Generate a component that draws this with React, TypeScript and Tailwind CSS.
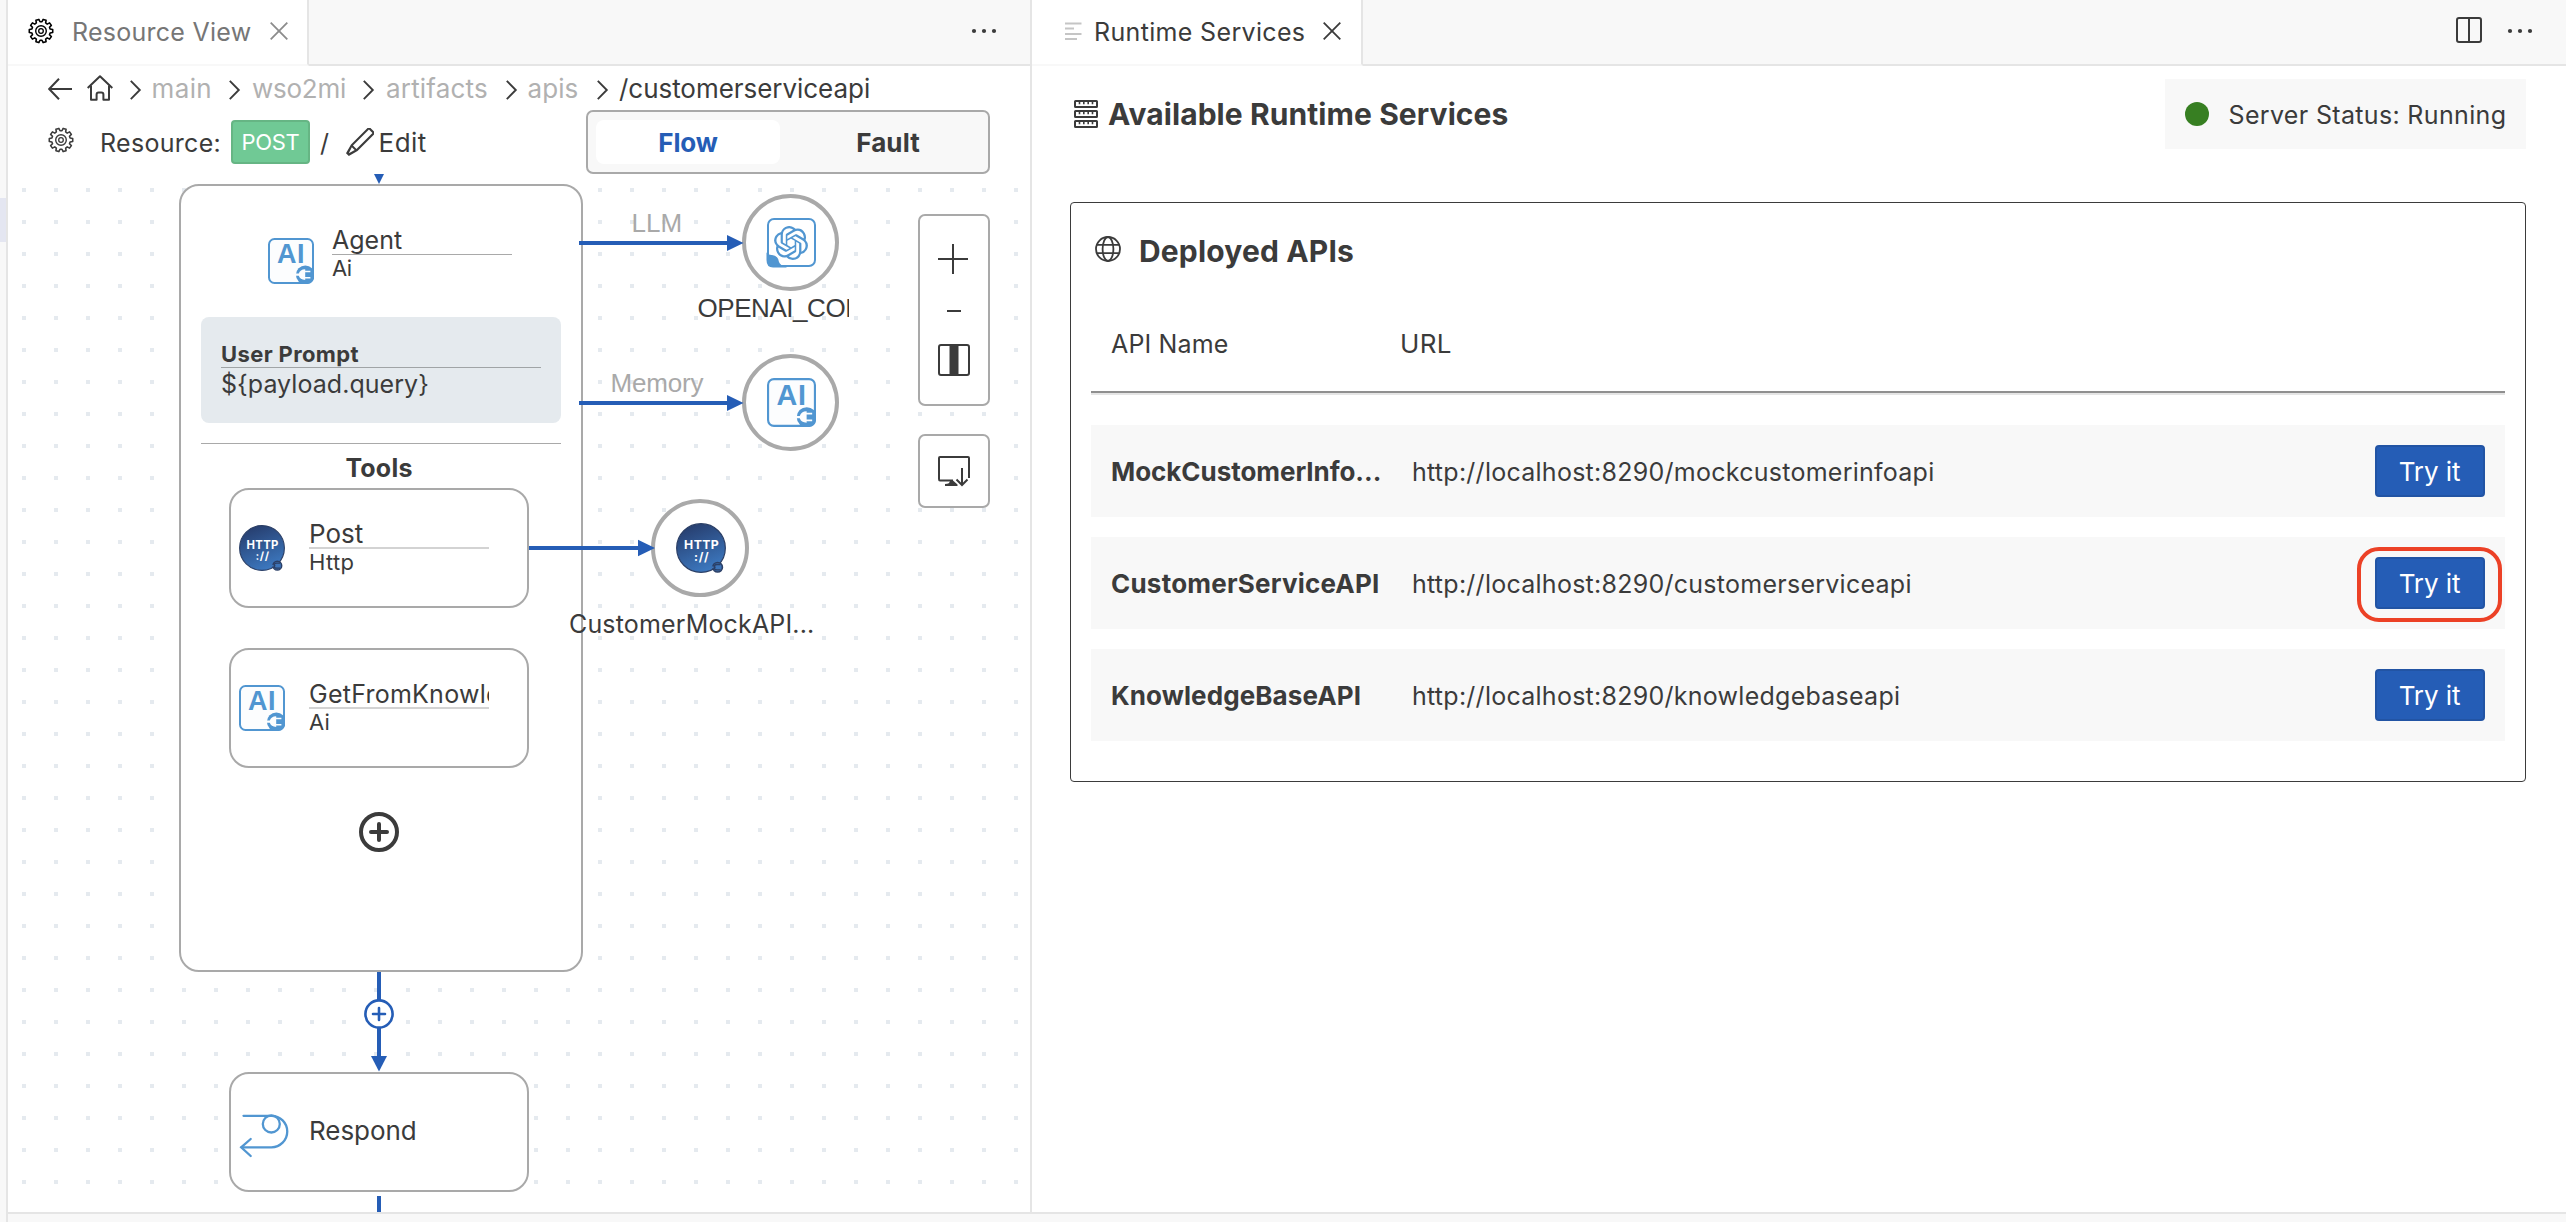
import React from "react";
import { SiOpenai } from "react-icons/si";
import { VscEdit } from "react-icons/vsc";

type SvgProps = { className?: string };

const gearPath = (() => {
  const pts: string[] = [];
  const teeth = 10;
  for (let i = 0; i < teeth; i++) {
    const mid = ((i + 0.5) * 360) / teeth - 90;
    const corners: [number, number][] = [
      [-12, 9.3],
      [-7.5, 11.8],
      [7.5, 11.8],
      [12, 9.3],
    ];
    corners.forEach(([d, r]) => {
      const a = ((mid + d) * Math.PI) / 180;
      pts.push(`${(13 + r * Math.cos(a)).toFixed(2)} ${(13 + r * Math.sin(a)).toFixed(2)}`);
    });
  }
  return `M${pts.join("L")}Z`;
})();

function Gear({ className }: SvgProps) {
  return (
    <svg className={className} width="26" height="26" viewBox="0 0 26 26" fill="none" stroke="currentColor" strokeLinejoin="round">
      <path d={gearPath} strokeWidth="1.6" />
      <circle cx="13" cy="13" r="5.3" strokeWidth="1.4" />
      <circle cx="13" cy="13" r="2.3" strokeWidth="1.3" />
    </svg>
  );
}

function Cross({ className }: SvgProps) {
  return (
    <svg className={className} width="18" height="18" viewBox="0 0 18 18" stroke="currentColor" strokeWidth="1.8">
      <path d="M0.7 0.7L17.3 17.3M17.3 0.7L0.7 17.3" />
    </svg>
  );
}

function Dots({ className }: SvgProps) {
  return (
    <svg className={className} width="26" height="6" viewBox="0 0 26 6" fill="currentColor">
      <circle cx="3" cy="3" r="2.1" />
      <circle cx="13" cy="3" r="2.1" />
      <circle cx="23" cy="3" r="2.1" />
    </svg>
  );
}

function Chevron() {
  return (
    <svg width="12" height="20" viewBox="0 0 12 20" fill="none" stroke="#3b3b3b" strokeWidth="1.9" className="mt-1">
      <path d="M0.8 0.8L9.8 10L0.8 19.2" />
    </svg>
  );
}

function BackArrow() {
  return (
    <svg width="24" height="22" viewBox="0 0 24 22" fill="none" stroke="#3b3b3b" strokeWidth="2" className="mt-0.5">
      <path d="M11 0.8L1.2 11L11 21.2M1.2 11H24" />
    </svg>
  );
}

function Home() {
  return (
    <svg width="26" height="26" viewBox="0 0 26 26" fill="none" stroke="#3b3b3b" strokeWidth="2" strokeLinejoin="round">
      <path d="M0.7 13L13 1.2L25.3 13" />
      <path d="M4 10.5V24.8H9.6V19.5Q9.6 17.4 11.6 17.4H14.4Q16.4 17.4 16.4 19.5V24.8H22V10.5" />
    </svg>
  );
}

function SplitEditor() {
  return (
    <svg width="26" height="26" viewBox="0 0 26 26" fill="none" stroke="#3b3b3b" strokeWidth="2">
      <rect x="1" y="1" width="24" height="24" rx="2" />
      <path d="M13 1V25" />
    </svg>
  );
}

function ServerStack() {
  return (
    <svg width="24" height="28" viewBox="0 0 24 28" fill="none" stroke="#3b3b3b" strokeWidth="2">
      {[1, 11, 21].map((y) => (
        <g key={y}>
          <rect x="1" y={y} width="22" height="6" rx="0.5" />
          <path d={`M5.5 ${y}v3.2M9.8 ${y}v3.2M14.2 ${y}v3.2M18.5 ${y}v3.2`} strokeWidth="1.6" />
        </g>
      ))}
    </svg>
  );
}

function Globe() {
  return (
    <svg width="26" height="26" viewBox="0 0 26 26" fill="none" stroke="#3b3b3b" strokeWidth="1.8">
      <circle cx="13" cy="13" r="12" />
      <ellipse cx="13" cy="13" rx="5.4" ry="12" />
      <path d="M1.8 8.8H24.2M1.8 17.2H24.2" />
    </svg>
  );
}

function AiIcon({ className }: SvgProps) {
  return (
    <svg className={className} viewBox="0 0 46 46">
      <clipPath id="ai-clip">
        <rect width="46" height="46" rx="6" />
      </clipPath>
      <rect x="1" y="1" width="44" height="44" rx="5.5" fill="#fcfdfe" stroke="#5196d1" strokeWidth="2" />
      <text x="9" y="25" fontSize="27" fontWeight="700" fontFamily="Liberation Sans, sans-serif" fill="#5196d1" textLength="27.5">
        AI
      </text>
      <g clipPath="url(#ai-clip)">
        <circle cx="37.3" cy="36.8" r="9.4" fill="#5196d1" />
        <path d="M27 35.6H30.8Q32 31.4 37.2 31.2V42Q32 41.8 30.8 37.8H27Z" fill="#fcfdfe" />
        <path d="M36 33.5H42.4M36 39.7H42.4" stroke="#fcfdfe" strokeWidth="1.6" />
      </g>
    </svg>
  );
}

function HttpIcon({ className }: SvgProps) {
  return (
    <svg className={className} viewBox="0 0 46 46">
      <linearGradient id="http-fill" x1="0.25" y1="0" x2="0.65" y2="1">
        <stop offset="0" stopColor="#263c6c" />
        <stop offset="1" stopColor="#3d7ac2" />
      </linearGradient>
      <circle cx="23" cy="23" r="22.4" fill="url(#http-fill)" stroke="#2b3f66" strokeWidth="1.1" />
      <text x="7.4" y="24" fontSize="11.3" fontWeight="700" fontFamily="Inter, sans-serif" fill="#fff" textLength="32">
        HTTP
      </text>
      <text x="16.6" y="35.2" fontSize="11" fontWeight="700" fontFamily="Inter, sans-serif" fill="#fff" textLength="13.4">
        ://
      </text>
      <circle cx="38.3" cy="40.7" r="4.4" fill="#3d74b8" stroke="#2b3f66" strokeWidth="1.5" />
      <path d="M33 40.7H36.4M41 38.2H37.6A2.5 2.5 0 0 0 37.6 43.2H41" fill="none" stroke="#2b3f66" strokeWidth="1.2" />
      <path d="M32.6 40.7H34.6" stroke="#3d74b8" strokeWidth="1.6" />
    </svg>
  );
}

function OpenAiIcon({ className }: SvgProps) {
  return (
    <div className={className}>
      <div className="relative flex size-full items-center justify-center rounded-[7px] border-2 border-[#5196d1] bg-white">
        <SiOpenai className="size-[34px] text-[#5196d1]" />
        <svg className="absolute -bottom-[3px] -left-[3px]" width="22" height="18" viewBox="0 0 22 18" fill="#5196d1">
          <path d="M0.5 2.5Q3.5 5.5 6 5Q12.5 6 13 12Q14 15.5 20.5 16.5V17.5H7Q0.5 17.5 0.5 10Z" />
        </svg>
      </div>
    </div>
  );
}

function RespondIcon({ className }: SvgProps) {
  return (
    <svg className={className} width="50" height="46" viewBox="239 1113 50 46" fill="none" stroke="#5196d1" strokeWidth="2.3" strokeLinecap="round">
      <path d="M243.5 1115.8H271.5A15.7 15.7 0 0 1 271.5 1147.3H241.5" />
      <circle cx="271.3" cy="1124" r="8.5" />
      <path d="M250.7 1139L241.2 1147.3L250.7 1156" />
    </svg>
  );
}

/* Grid dots, connectors and arrow heads of the flow diagram */
function Connectors() {
  return (
    <svg className="absolute top-[174px] left-2" width="1022" height="1038" viewBox="8 174 1022 1038">
      <defs>
        <pattern id="grid-dots" x="8" y="174" width="32" height="32" patternUnits="userSpaceOnUse">
          <rect x="14" y="14" width="4" height="4" fill="#e5eaef" />
        </pattern>
      </defs>
      <rect x="8" y="174" width="1022" height="1038" fill="url(#grid-dots)" />
      <path d="M374 174H384L379 184Z" fill="#255db6" />
      <path d="M379 972V1057M379 1196V1212" stroke="#255db6" strokeWidth="4" />
      <path d="M371 1056H387L379 1071.5Z" fill="#255db6" />
    </svg>
  );
}

function SideArrows() {
  return (
    <svg className="absolute top-[174px] left-2" width="1022" height="500" viewBox="8 174 1022 500" fill="#255db6">
      <path d="M579 241H727V235L743.5 243L727 251V245H579Z" />
      <path d="M579 401H727V395L743.5 403L727 411V405H579Z" />
      <path d="M529 546H638V539.7L655 548L638 556.3V550H529Z" />
    </svg>
  );
}

function ToolNode({ className, icon, title, type, titleClass }: { className: string; icon: React.ReactNode; title: string; type: string; titleClass: string }) {
  return (
    <div className={`absolute left-[229px] flex h-[120px] w-[300px] rounded-[20px] border-2 border-[#a9a9a9] bg-white ${className}`}>
      <div className="mt-[35px] ml-2 size-[46px] shrink-0">{icon}</div>
      <div className="mt-[28px] ml-6 w-[180px]">
        <div className={`h-[31px] overflow-hidden border-b-2 border-[#d3d3d3] leading-[32px] whitespace-nowrap ${titleClass}`}>{title}</div>
        <div className="-mt-[3px] text-[22px] leading-[32px] tracking-[0.3px]">{type}</div>
      </div>
    </div>
  );
}

function Canvas() {
  return (
    <div className="relative h-[1038px] overflow-hidden">
      <div className="absolute -top-[174px] -left-2 h-[1222px] w-[1030px]">
        <Connectors />
        <div className="absolute top-[184px] left-[179px] h-[788px] w-[404px] rounded-[20px] border-2 border-[#a9a9a9] bg-white" />

        <AiIcon className="absolute top-[238px] left-[268px] size-[46px]" />
        <div className="absolute top-[224px] left-[332px] w-[180px]">
          <div className="h-[31px] border-b border-[#a9a9a9] text-[25px] leading-[32px]">Agent</div>
          <div className="-mt-[3px] text-[22px] leading-[32px] tracking-[-0.6px]">Ai</div>
        </div>

        <div className="absolute top-[317px] left-[201px] h-[106px] w-[360px] rounded-[8px] bg-[#e5eaee] px-5 pt-[21px]">
          <div className="h-[30px] border-b border-[#a0a4a6] text-[22px] leading-[32px] font-bold tracking-[0.37px]">User Prompt</div>
          <div className="text-[25px] leading-[32px] tracking-[0.05px]">{"${payload.query}"}</div>
        </div>
        <div className="absolute top-[443px] left-[201px] h-px w-[360px] bg-[#a9a9a9]" />
        <div className="absolute top-[452px] left-[279px] w-[200px] text-center text-[25px] leading-[32px] font-bold tracking-[0.2px]">Tools</div>

        <ToolNode className="top-[488px]" icon={<HttpIcon className="size-[46px]" />} title="Post" type="Http" titleClass="text-[26px]" />
        <ToolNode className="top-[648px]" icon={<AiIcon className="size-[46px]" />} title="GetFromKnowledge" type="Ai" titleClass="text-[25px] tracking-[0.25px]" />

        <svg className="absolute top-[812px] left-[359px]" width="40" height="40" viewBox="0 0 40 40" fill="none" stroke="#3b3b3b" strokeWidth="4" strokeLinecap="round">
          <circle cx="20" cy="20" r="18" />
          <path d="M20 12V28M12 20H28" />
        </svg>

        <svg className="absolute top-[999px] left-[364px]" width="30" height="30" viewBox="0 0 30 30" fill="none" stroke="#255db6" strokeWidth="2.6" strokeLinecap="round">
          <circle cx="15" cy="15" r="13.6" fill="#fff" />
          <path d="M15 9V21M9 15H21" />
        </svg>

        <div className="absolute top-[1072px] left-[229px] flex h-[120px] w-[300px] rounded-[20px] border-2 border-[#a9a9a9] bg-white">
          <RespondIcon className="mt-[39px] ml-2 shrink-0" />
          <div className="mt-[41px] ml-[20px] text-[26px] leading-[32px] tracking-[-0.05px]">Respond</div>
        </div>

        <div className="absolute top-[207px] left-[631.5px] font-['Liberation_Sans',sans-serif] text-[26px] leading-[32px] text-[#a9a9a9]">LLM</div>
        <div className="absolute top-[194px] left-[741.5px] flex size-[97px] items-center justify-center rounded-full border-4 border-[#a9a9a9] bg-white">
          <OpenAiIcon className="ml-[2px] size-[49px]" />
        </div>
        <div className="absolute top-[292px] left-[697.5px] w-[151px] overflow-hidden font-['Liberation_Sans',sans-serif] text-[26px] leading-[32px] tracking-[-0.45px] whitespace-nowrap">OPENAI_CONN</div>

        <div className="absolute top-[367px] left-[610.5px] font-['Liberation_Sans',sans-serif] text-[26px] leading-[32px] tracking-[-0.18px] text-[#a9a9a9]">Memory</div>
        <div className="absolute top-[354px] left-[741.5px] flex size-[97px] items-center justify-center rounded-full border-4 border-[#a9a9a9] bg-white">
          <AiIcon className="ml-[2px] size-[49px]" />
        </div>

        <div className="absolute top-[499px] left-[651px] flex size-[98px] items-center justify-center rounded-full border-4 border-[#a9a9a9] bg-white">
          <HttpIcon className="-mt-px ml-[2px] size-[50px]" />
        </div>
        <div className="absolute top-[608px] left-[569px] text-[25px] leading-[32px] tracking-[0.16px]">CustomerMockAPI...</div>
        <SideArrows />

        <div className="absolute top-[214px] left-[918px] h-[192px] w-[72px] rounded-[7px] border-2 border-[#a9a9a9] bg-white">
          <svg className="absolute top-[28px] left-[18px]" width="32" height="132" viewBox="0 0 32 132" fill="none" stroke="#3b3b3b" strokeWidth="2">
            <path d="M0 15H30M15 0V30M9 67H23" />
            <rect x="1" y="101" width="30" height="30" rx="2" />
            <path d="M16 101V131" strokeWidth="9" />
          </svg>
        </div>
        <div className="absolute top-[434px] left-[918px] h-[74px] w-[72px] rounded-[7px] border-2 border-[#a9a9a9] bg-white">
          <svg className="absolute top-[20px] left-[18px]" width="32" height="32" viewBox="0 0 32 32" fill="none" stroke="#3b3b3b" strokeWidth="2">
            <path d="M31 22V2Q31 1 30 1H2Q1 1 1 2V23Q1 24.5 2 24.5H15" />
            <path d="M12 24.5H15L19.5 28.5V30H7V28Q12 28 12 24.5Z" fill="#3b3b3b" stroke="none" />
            <path d="M24 12V29M18.5 23.5L24 29L29.5 23.5" />
          </svg>
        </div>
      </div>
    </div>
  );
}

const crumbText = "pt-px text-[26px] leading-[32px] whitespace-nowrap text-[#b1b1b1]";

function ResourcePanel() {
  return (
    <div className="flex h-[1212px] w-[1022px] flex-col overflow-hidden bg-white">
      <div className="flex h-[66px] bg-[#f8f8f8]">
        <div className="flex w-[301px] items-center border-r-2 border-b-2 border-r-[#e5e5e5] border-b-[#f8f8f8] bg-white pl-5">
          <Gear className="-mt-0.5 text-black" />
          <span className="ml-[18px] text-[25px] leading-[32px] tracking-[0.26px] text-[#767676]">Resource View</span>
          <Cross className="-mt-0.5 ml-[18.5px] text-[#8c8c8c]" />
        </div>
        <div className="flex flex-1 items-center justify-end border-b-2 border-[#e5e5e5] pr-[33px]">
          <Dots className="-mt-0.5" />
        </div>
      </div>
      <div className="grid h-11 grid-cols-[39px_43px_21.5px_77.5px_23px_111px_23px_120px_21.5px_69.5px_22px_auto] items-center pl-10">
        <BackArrow />
        <Home />
        <Chevron />
        <span className={`${crumbText} tracking-[0.4px]`}>main</span>
        <Chevron />
        <span className={`${crumbText} tracking-[-0.24px]`}>wso2mi</span>
        <Chevron />
        <span className={`${crumbText} tracking-[0.19px]`}>artifacts</span>
        <Chevron />
        <span className={`${crumbText} tracking-[0.1px]`}>apis</span>
        <Chevron />
        <span className="pt-px text-[26px] leading-[32px] tracking-[-0.04px]">/customerserviceapi</span>
      </div>
      <div className="flex h-16 items-center pl-10">
        <Gear className="-mt-1" />
        <span className="ml-[26px] w-[131px] pt-px text-[25px] leading-[32px] tracking-[0.3px]">Resource:</span>
        <div className="flex h-11 w-[79px] items-center justify-center rounded-[4px] border-2 border-[#66b584] bg-[#70c995] text-[22px] tracking-[-0.3px] text-white">POST</div>
        <span className="ml-[10px] w-[24px] pt-px text-[25px] leading-[32px]">/</span>
        <VscEdit className="size-8 shrink-0" />
        <span className="ml-[2.5px] pt-px text-[26px] leading-[32px] tracking-[0.5px]">Edit</span>
        <div className="mr-10 ml-auto flex h-16 w-[404px] items-center rounded-[7px] border-2 border-[#a9a9a9] bg-[#f8f8f8] pl-2 text-[26px] leading-[32px] font-bold">
          <div className="flex h-11 w-[184px] items-center justify-center rounded-[8px] bg-white pt-px tracking-[-0.17px] text-[#255db6]">Flow</div>
          <div className="ml-[16px] flex h-11 w-[184px] items-center justify-center pt-px tracking-[0.1px]">Fault</div>
        </div>
      </div>
      <Canvas />
    </div>
  );
}

const apis = [
  { name: "MockCustomerInfo...", url: "http://localhost:8290/mockcustomerinfoapi", track: "tracking-[-0.05px]" },
  { name: "CustomerServiceAPI", url: "http://localhost:8290/customerserviceapi", track: "tracking-[0.22px]", marked: true },
  { name: "KnowledgeBaseAPI", url: "http://localhost:8290/knowledgebaseapi", track: "tracking-[0.1px]" },
];

function RuntimePanel() {
  return (
    <div className="flex h-[1212px] flex-1 flex-col bg-white">
      <div className="flex h-[66px] bg-[#f8f8f8]">
        <div className="flex w-[331px] items-center border-r-2 border-b-2 border-r-[#e5e5e5] border-b-[#f8f8f8] bg-white pl-[33px]">
          <svg width="17" height="20" viewBox="0 0 17 20" stroke="#c5c5c5" strokeWidth="2" className="-mt-0.5">
            <path d="M0 2.5H16.5M0 7.5H9M0 13H16.5M0 18H12" />
          </svg>
          <span className="ml-[12px] text-[25px] leading-[32px] tracking-[0.34px]">Runtime Services</span>
          <Cross className="-mt-0.5 ml-[18px]" />
        </div>
        <div className="flex flex-1 items-center justify-end border-b-2 border-[#e5e5e5] pr-[33px]">
          <div className="-mt-1">
            <SplitEditor />
          </div>
          <Dots className="-mt-0.5 ml-[25px]" />
        </div>
      </div>
      <div className="mt-[13px] mr-10 ml-[42px] flex h-[70px] items-center">
        <ServerStack />
        <h1 className="ml-[10px] text-[30px] font-bold tracking-[0.08px]">Available Runtime Services</h1>
        <div className="ml-auto flex h-[70px] w-[361px] items-center bg-[#f8f8f8] pl-5">
          <div className="size-6 rounded-full bg-[#377f22]" />
          <span className="ml-[19.5px] pt-px text-[25px] leading-[32px] tracking-[0.34px]">Server Status: Running</span>
        </div>
      </div>
      <div className="mt-[53px] mr-10 ml-[38px] h-[580px] rounded-[4px] border border-[#3b3b3b] px-5">
        <div className="mt-[26px] flex h-11 items-center pl-1">
          <div className="-mt-1">
            <Globe />
          </div>
          <h2 className="ml-[18px] text-[30px] font-bold tracking-[0.16px]">Deployed APIs</h2>
        </div>
        <div className="mt-[55px] flex pl-5 text-[25px] leading-[32px]">
          <span className="w-[289px] tracking-[0.15px]">API Name</span>
          <span className="text-[26px] tracking-[0.3px]">URL</span>
        </div>
        <div className="mt-[31px] h-1 border-t-2 border-b-2 border-t-[#8f8f8f] border-b-[#e5e5e5]" />
        <div className="mt-[30px] flex flex-col gap-5">
          {apis.map((api) => (
            <div key={api.name} className="flex h-[92px] items-center bg-[#f8f8f8] px-5 leading-[32px]">
              <span className={`w-[301px] pt-0.5 text-[26px] font-bold ${api.track}`}>{api.name}</span>
              <span className="pt-0.5 text-[25px] tracking-[0.26px]">{api.url}</span>
              <div className="relative ml-auto">
                <button className="block h-[52px] w-[110px] rounded-[4px] border-2 border-[#2254a4] bg-[#255db6] pt-px pr-px text-[26px] leading-[32px] tracking-[-0.09px] text-white">Try it</button>
                {api.marked && <div className="absolute -top-[10px] -left-[18px] h-[75px] w-[145px] rounded-[22px] border-4 border-[#ec4126]" />}
              </div>
            </div>
          ))}
        </div>
      </div>
    </div>
  );
}

export default function App() {
  return (
    <div className="flex h-[1222px] w-[2566px] overflow-hidden bg-[#f8f8f8] font-[Inter,sans-serif] text-[#3b3b3b]">
      <div className="w-2 border-r-2 border-[#e5e5e5] pt-[198px]">
        <div className="h-11 bg-[#e4e6f1]" />
      </div>
      <div className="flex flex-1 flex-col">
        <div className="flex h-[1212px]">
          <ResourcePanel />
          <div className="w-0.5 bg-[#e5e5e5]" />
          <RuntimePanel />
        </div>
        <div className="h-[10px] border-t-2 border-[#e5e5e5]" />
      </div>
    </div>
  );
}
